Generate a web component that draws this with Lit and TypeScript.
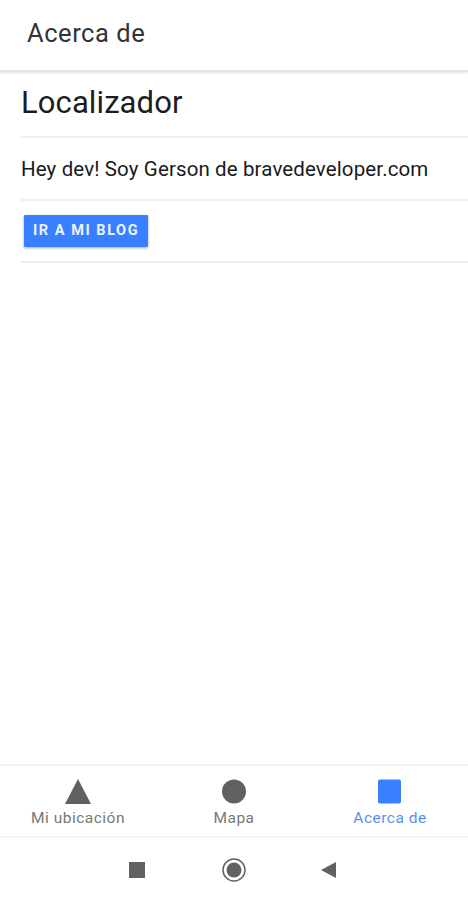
import { LitElement, html, css } from "lit";
import { customElement } from "lit/decorators.js";

@customElement("app-root")
export class AppRoot extends LitElement {
  static styles = css`
    :host { display: block; width: 468px; height: 900px; background: #fff; font-family: Roboto, sans-serif; overflow: hidden; }
    .page { display: flex; flex-direction: column; height: 900px; }
    .header { height: 72px; flex: none; box-sizing: border-box; padding: 0 0 4px 27px; display: flex; align-items: center; font-size: 25.5px; font-weight: 400; color: #333333; border-bottom: 2px solid #e4e4e4; box-shadow: 0 1px 3px rgba(0,0,0,.12); letter-spacing: .55px; }
    .content { flex: 1; padding: 0 0 0 21px; min-height: 0; }
    .title { height: 66px; box-sizing: border-box; padding-bottom: 3px; display: flex; align-items: center; font-size: 31px; color: #1c1c1c; border-bottom: 2px solid #f0f0f0; letter-spacing: .1px; }
    .text { height: 63px; box-sizing: border-box; display: flex; align-items: center; font-size: 20.5px; color: #1a1a1a; border-bottom: 2px solid #eeeeee; letter-spacing: .12px; }
    .action { height: 62px; box-sizing: border-box; display: flex; align-items: center; padding-left: 3px; padding-bottom: 1px; border-bottom: 2px solid #eeeeee; }
    .btn { width: 124px; height: 32px; border: 0; border-radius: 1px; background: #3880ff; color: #eef3ff; font: 700 14.5px Roboto, sans-serif; letter-spacing: 1.55px; padding: 0; box-shadow: 0 1px 3px rgba(0,0,0,.35); }
    .tabs { height: 74px; flex: none; box-sizing: border-box; display: grid; grid-template-columns: repeat(3, 156px); border-top: 2px solid #f3f3f3; border-bottom: 2px solid #f5f5f5; }
    .tab { display: flex; flex-direction: column; align-items: center; padding-top: 13px; color: #787878; font-size: 15.5px; letter-spacing: .5px; }
    .tab svg { width: 26px; height: 26px; display: block; fill: #616161; margin-bottom: 4px; }
    .tab.on { color: #5a8ff0; }
    .tab.on svg { fill: #3880ff; }
    .nav { height: 62px; flex: none; }
    .nav svg { display: block; width: 468px; height: 62px; }
  `;

  render() {
    return html`<div class="page">
      <div class="header">Acerca de</div>
      <div class="content">
        <div class="title">Localizador</div>
        <div class="text">Hey dev! Soy Gerson de bravedeveloper.com</div>
        <div class="action"><button class="btn">IR A MI BLOG</button></div>
      </div>
      <div class="tabs">
        <div class="tab"><svg viewBox="0 0 26 26"><path d="M13 0 L26 25 H0 Z"/></svg>Mi ubicación</div>
        <div class="tab"><svg viewBox="0 0 26 26"><circle cx="13" cy="12.5" r="12"/></svg>Mapa</div>
        <div class="tab on"><svg viewBox="0 0 26 26"><rect x="1" y="0.5" width="23" height="24" rx="2"/></svg>Acerca de</div>
      </div>
      <div class="nav"><svg viewBox="0 0 468 62">
        <rect x="129" y="24" width="16" height="16" fill="#616161"/>
        <circle cx="234" cy="32" r="11" fill="none" stroke="#616161" stroke-width="1.5"/>
        <circle cx="234" cy="32" r="7.5" fill="#616161"/>
        <path d="M336 24 V40 L321 32 Z" fill="#616161"/>
      </svg></div>
    </div>`;
  }
}
